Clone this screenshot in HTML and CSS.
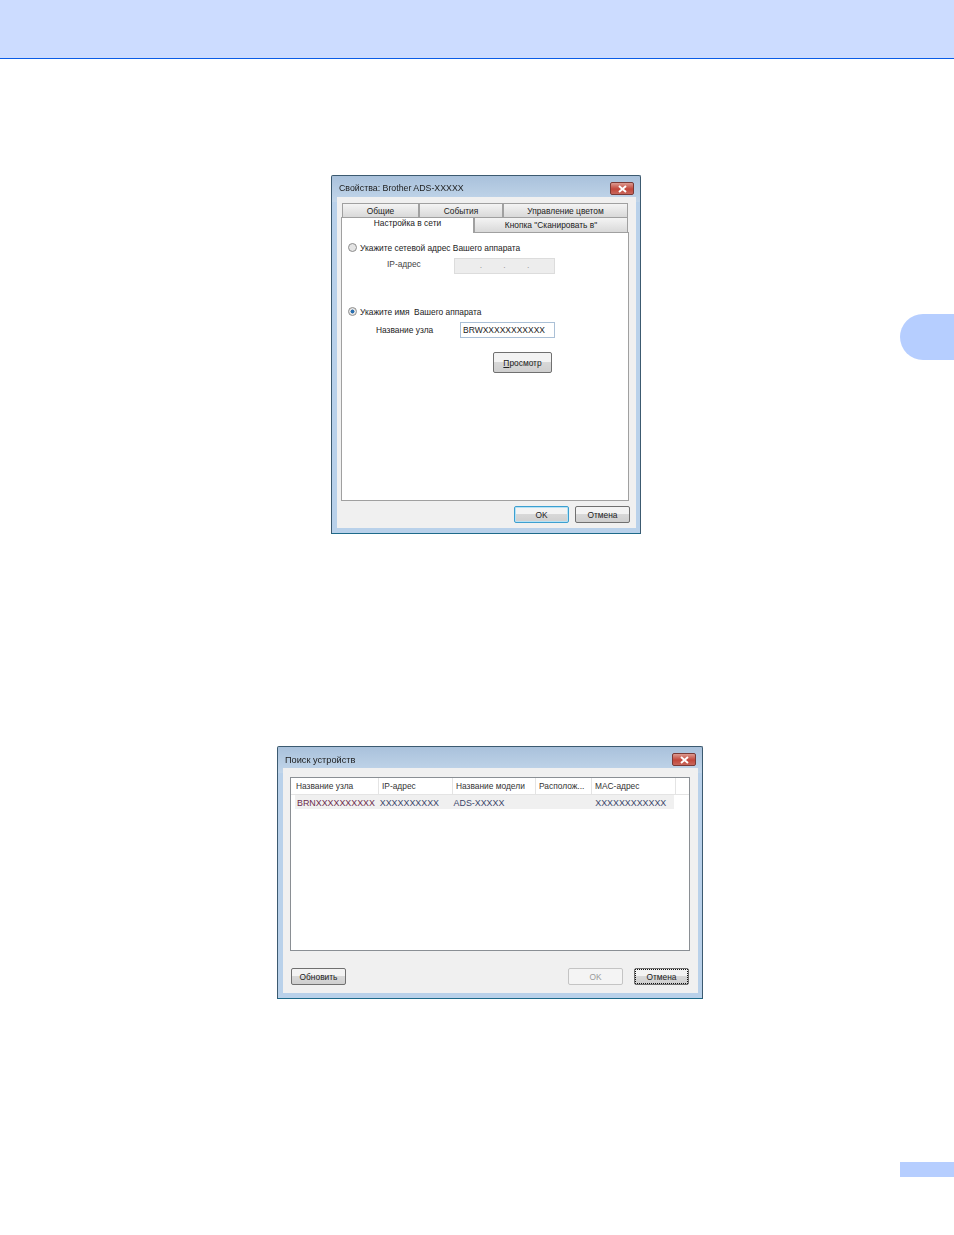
FILE: index.html
```html
<!DOCTYPE html>
<html lang="ru">
<head>
    <meta charset="UTF-8">
    <title>Поиск устройств</title>
    <link rel="stylesheet" href="styles.css">
</head>
<body>
    <div class="top-bar"></div>
    <div class="chapter-tab"></div>

    <div class="win win-props">
        <div class="win-title">
            <span>Свойства: Brother ADS-XXXXX</span>
            <div class="close">
                <svg width="9" height="8" viewBox="0 0 9 8"><path d="M1 1l7 6M8 1L1 7" stroke="#fff" stroke-width="2" fill="none"/></svg>
            </div>
        </div>
        <div class="win-body">
            <div class="tabs">
                <div class="tab-row row-back">
                    <div class="tab tab-a">Общие</div>
                    <div class="tab tab-b">События</div>
                    <div class="tab tab-c">Управление цветом</div>
                </div>
                <div class="tab-row row-front">
                    <div class="tab tab-active">Настройка в сети</div>
                    <div class="tab tab-d">Кнопка "Сканировать в"</div>
                </div>
            </div>
            <div class="sheet">
                <label class="radio-line">
                    <span class="radio"></span>
                    Укажите сетевой адрес Вашего аппарата
                </label>
                <div class="field-line ip-line">
                    <span class="ip-label">IP-адрес</span>
                    <div class="input input-off">
                        <span>.</span><span>.</span><span>.</span>
                    </div>
                </div>
                <label class="radio-line radio-line-2">
                    <span class="radio radio-on"></span>
                    Укажите имя&nbsp; Вашего аппарата
                </label>
                <div class="field-line node-line">
                    <span class="node-label">Название узла</span>
                    <div class="input">BRWXXXXXXXXXXX</div>
                </div>
                <div class="browse-line">
                    <button class="btn btn-browse"><u>П</u>росмотр</button>
                </div>
            </div>
            <div class="btn-line">
                <button class="btn btn-default">OK</button>
                <button class="btn">Отмена</button>
            </div>
        </div>
    </div>

    <div class="win win-search">
        <div class="win-title">
            <span>Поиск устройств</span>
            <div class="close">
                <svg width="9" height="8" viewBox="0 0 9 8"><path d="M1 1l7 6M8 1L1 7" stroke="#fff" stroke-width="2" fill="none"/></svg>
            </div>
        </div>
        <div class="win-body">
            <div class="list">
                <div class="list-head">
                    <div class="col col-1">Название узла</div>
                    <div class="col col-2">IP-адрес</div>
                    <div class="col col-3">Название модели</div>
                    <div class="col col-4">Располож...</div>
                    <div class="col col-5">MAC-адрес</div>
                </div>
                <div class="list-row">
                    <div class="cell col-1 cell-node">BRNXXXXXXXXXX</div>
                    <div class="cell col-2">XXXXXXXXXX</div>
                    <div class="cell col-3">ADS-XXXXX</div>
                    <div class="cell col-4"></div>
                    <div class="cell col-5">XXXXXXXXXXXX</div>
                </div>
            </div>
            <div class="btn-line btn-line-search">
                <button class="btn">Обновить</button>
                <div class="btn-gap"></div>
                <button class="btn btn-off">OK</button>
                <button class="btn btn-focus">Отмена</button>
            </div>
        </div>
    </div>

    <div class="page-tab"></div>
</body>
</html>
```

FILE: styles.css
```css
* {
    box-sizing: border-box;
}
body {
    margin: 0;
    height: 1235px;
    position: relative;
    overflow: hidden;
    background: #fff;
    font-family: "Liberation Sans", Arial, sans-serif;
    font-size: 8.4px;
    color: #222;
}
.top-bar {
    height: 59px;
    background: #ccdcff;
    border-bottom: 1px solid #0a5ce6;
}
.chapter-tab {
    position: absolute;
    left: 900px;
    top: 314px;
    width: 54px;
    height: 46px;
    background: #b6ceff;
    border-radius: 23px 0 0 23px;
}
.page-tab {
    position: absolute;
    left: 900px;
    top: 1162px;
    width: 54px;
    height: 15px;
    background: #b6ceff;
}

/* windows */
.win {
    background: linear-gradient(#a9c1db 0, #c2d6ea 26px, #b9d1ea 26px);
    border: 1px solid #3c5a70;
    border-radius: 2px 2px 0 0;
    border-bottom-color: #1d6a8a;
    display: flex;
    flex-direction: column;
    filter: blur(0.25px);
}
.win-props {
    width: 310px;
    height: 359px;
    margin: 116px 0 0 331px;
}
.win-search {
    width: 426px;
    height: 253px;
    margin: 212px 0 0 277px;
}
.win-title {
    display: flex;
    justify-content: space-between;
    padding: 0 6px 0 7px;
    height: 21px;
    flex: none;
    line-height: 24px;
    font-size: 8.8px;
    color: #1c1c1c;
}
.win-search .win-title {
    font-size: 9.2px;
    line-height: 26px;
}
.close {
    width: 24px;
    height: 13px;
    margin-top: 6px;
    background: linear-gradient(#dc9a90, #c2463a 55%, #c8675c);
    border: 1px solid #7a3a36;
    border-radius: 2px;
    display: flex;
    align-items: center;
    justify-content: center;
}
.win-body {
    flex: 1;
    margin: 0 4px 5px 5px;
    background: #f0f0f0;
    display: flex;
    flex-direction: column;
}

/* tabs */
.tabs {
    margin: 6px 0 0 4px;
    width: 288px;
    flex: none;
}
.tab-row {
    display: flex;
}
.tab {
    text-align: center;
}
.row-back {
    height: 14px;
    padding-left: 1px;
}
.row-back .tab,
.tab-d {
    background: linear-gradient(#f4f4f4, #d9d9d9);
    border: 1px solid #a0a0a0;
    border-bottom: 0;
    line-height: 15px;
}
.tab-a { width: 77px; }
.tab-b { width: 84px; }
.tab-c { width: 125px; }
.row-front {
    height: 15px;
}
.tab-active {
    width: 133px;
    height: 16px;
    background: #fff;
    border: 1px solid #a0a0a0;
    border-bottom: 0;
    line-height: 11px;
    position: relative;
    z-index: 1;
}
.tab-d {
    width: 154px;
    line-height: 15px;
}
.sheet {
    margin-left: 4px;
    width: 288px;
    height: 269px;
    background: #fff;
    border: 1px solid #a0a0a0;
    padding: 8px 0 0 6px;
    flex: none;
}
.radio-line {
    display: flex;
    align-items: center;
    gap: 3px;
    height: 13px;
}
.radio-line-2 {
    margin-top: 32px;
}
.radio {
    width: 9px;
    height: 9px;
    border-radius: 50%;
    border: 1px solid #8d8d8d;
    background: #e4e4e4;
    flex: none;
}
.radio-on {
    background: radial-gradient(circle, #2a6fb0 0, #2a6fb0 35%, #e4e4e4 45%);
}
.field-line {
    display: flex;
    align-items: center;
}
.ip-line {
    margin-top: 4px;
    height: 15px;
}
.ip-label {
    width: 106px;
    padding-left: 39px;
    margin-top: -4px;
    color: #444;
}
.node-line {
    margin-top: 4px;
    height: 16px;
}
.node-label {
    width: 112px;
    padding-left: 28px;
}
.input {
    width: 95px;
    height: 16px;
    border: 1px solid #abc0d6;
    background: #fff;
    padding-left: 2px;
    line-height: 14px;
    font-size: 8.5px;
}
.input-off {
    width: 101px;
    background: #ededed;
    border-color: #dcdcdc;
    display: flex;
    justify-content: space-around;
    padding: 0 14px;
    line-height: 13px;
    color: #999;
}
.browse-line {
    margin: 14px 0 0 145px;
}

/* buttons */
.btn {
    width: 55px;
    height: 17px;
    padding: 0;
    font: inherit;
    color: #222;
    background: linear-gradient(#f3f3f3 45%, #d8d8d8 50%, #cfcfcf);
    border: 1px solid #707070;
    border-radius: 2px;
}
.btn-browse {
    width: 59px;
    height: 21px;
}
.btn-default {
    border-color: #3c9fd0;
    box-shadow: inset 0 0 0 1px #b6e2f5;
}
.btn-off {
    background: #f4f4f4;
    border-color: #c4c4c4;
    color: #9a9a9a;
}
.btn-focus {
    outline: 1px dotted #111;
    outline-offset: -2px;
}
.btn-line {
    display: flex;
    justify-content: flex-end;
    gap: 6px;
    padding: 5px 6px 0 0;
}
.btn-line-search {
    gap: 11px;
    padding: 17px 9px 0 8px;
}
.btn-gap {
    flex: 1;
}

/* device list */
.list {
    margin: 9px 8px 0 7px;
    height: 174px;
    background: #fff;
    border: 1px solid #8a8f94;
    flex: none;
}
.list-head {
    display: flex;
    height: 17px;
    border-bottom: 1px solid #e4e4e4;
    padding-left: 1px;
    line-height: 17px;
    color: #333;
}
.col {
    border-right: 1px solid #e4e4e4;
    padding-left: 4px;
}
.list-head .col-2,
.list-head .col-3,
.list-head .col-4,
.list-head .col-5 {
    padding-left: 3px;
}
.col-1 { width: 87px; }
.col-2 { width: 74px; }
.col-3 { width: 83px; }
.col-4 { width: 56px; }
.col-5 { width: 84px; }
.list-row {
    display: flex;
    height: 14px;
    width: 379px;
    margin-left: 4px;
    background: #f0f0f0;
    line-height: 17px;
    color: #3a4468;
    font-size: 8.9px;
}
.cell {
    padding-left: 2px;
    white-space: nowrap;
}
.list-row .col-1 { width: 83px; }
.list-row .col-5 { padding-left: 5px; }
.cell-node {
    color: #6c2a4a;
}
```
